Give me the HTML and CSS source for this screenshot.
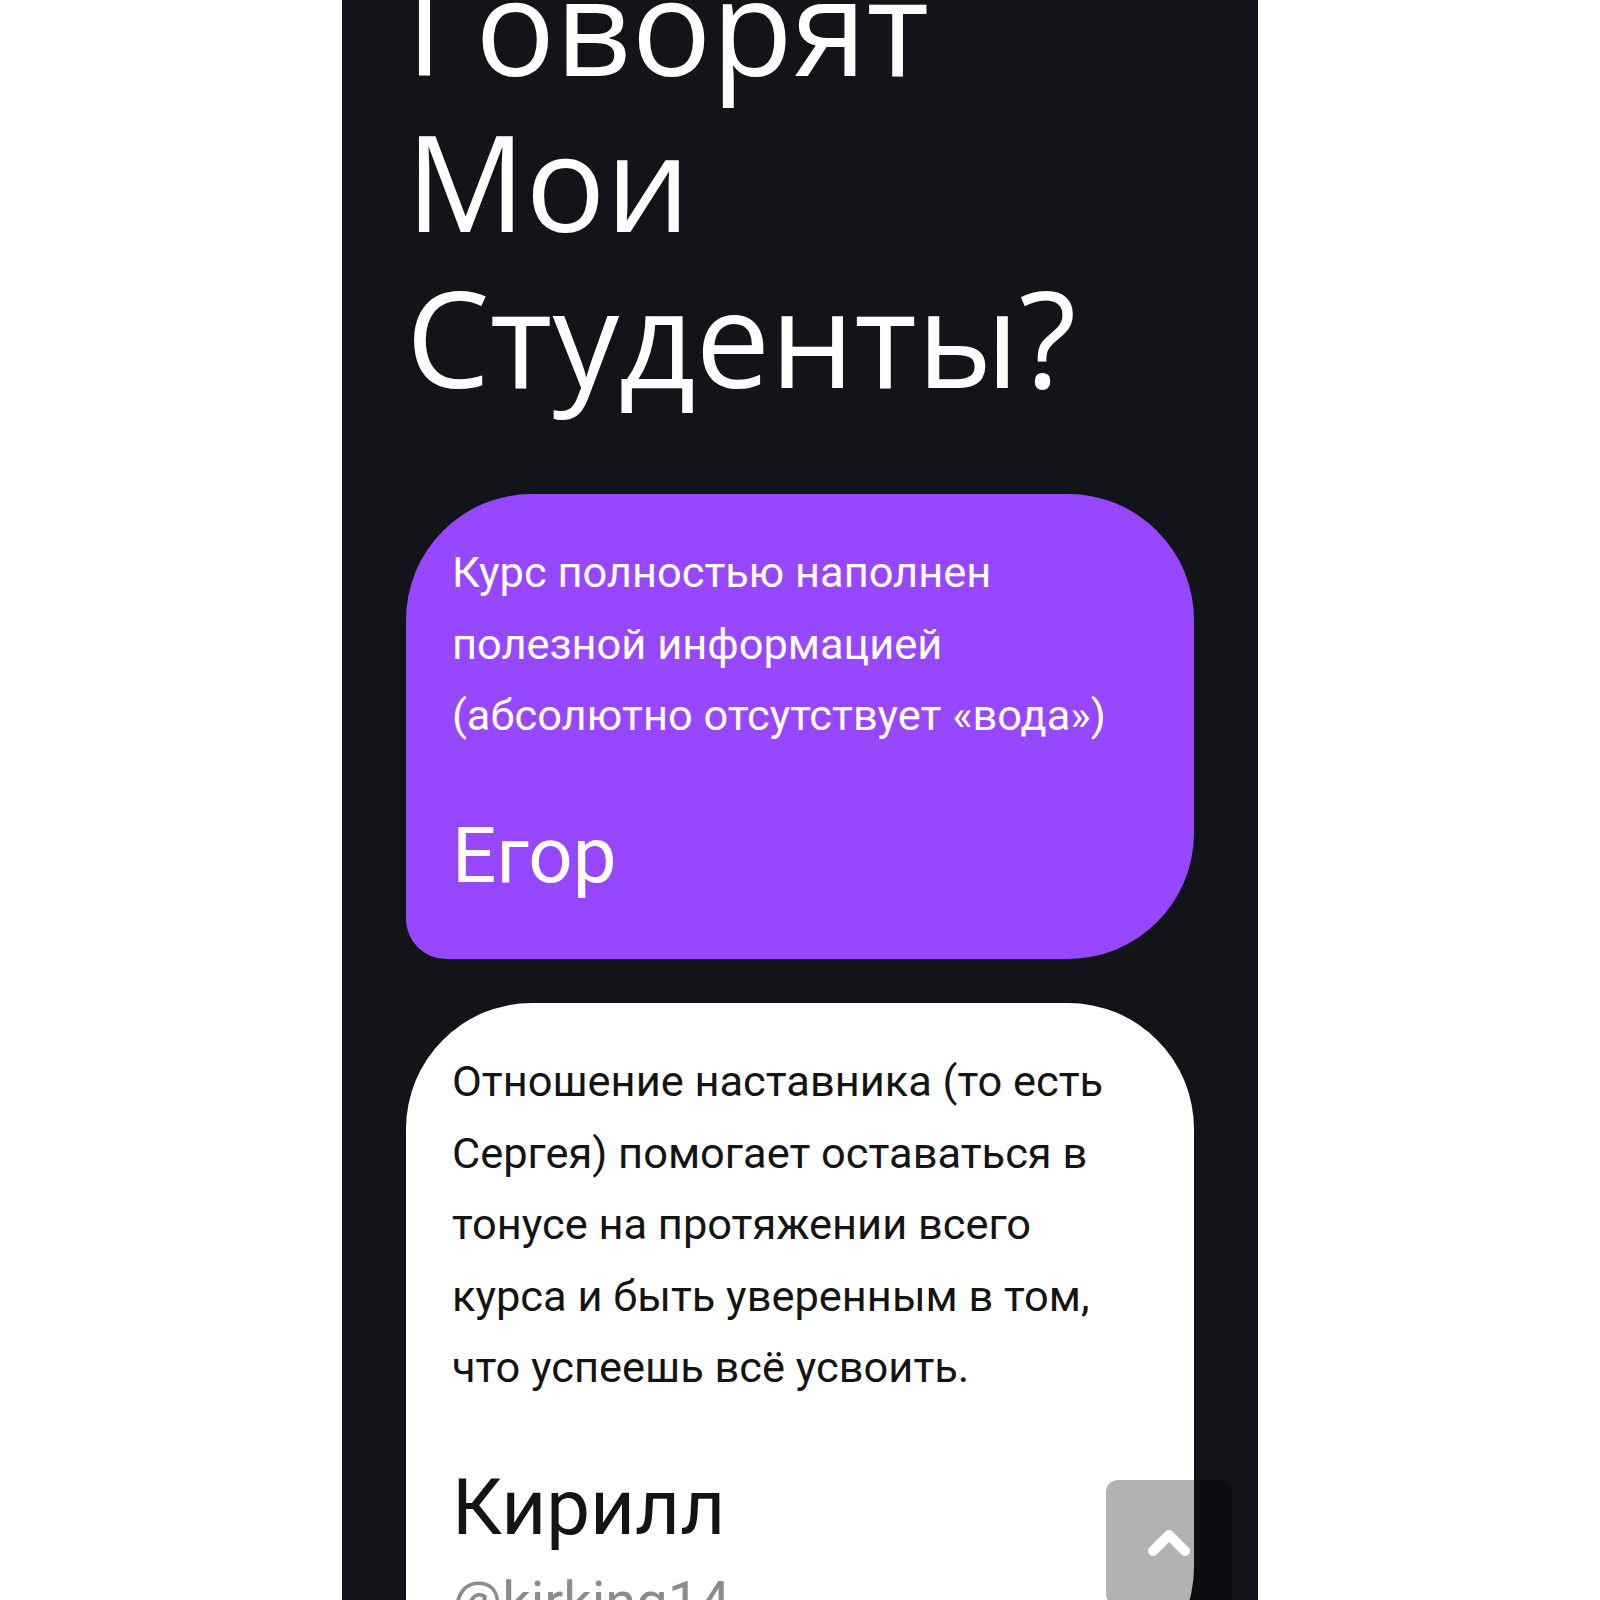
FILE: index.html
```html
<!DOCTYPE html>
<html lang="ru">
<head>
<meta charset="utf-8">
<title>Отзывы</title>
<link rel="stylesheet" href="styles.css">
</head>
<body>
<main class="panel">
  <h2 class="title">Говорят<br>Мои<br>Студенты?</h2>
  <section class="reviews">
    <article class="card card-purple">
      <p class="quote">Курс полностью наполнен<br>полезной информацией<br>(абсолютно отсутствует «вода»)</p>
      <p class="name">Егор</p>
    </article>
    <article class="card card-white">
      <p class="quote">Отношение наставника (то есть<br>Сергея) помогает оставаться в<br>тонусе на протяжении всего<br>курса и быть уверенным в том,<br>что успеешь всё усвоить.</p>
      <p class="name">Кирилл</p>
      <p class="handle">@kirking14</p>
    </article>
  </section>
</main>
<a class="to-top" href="#" aria-label="Наверх">
  <svg width="44" height="30" viewBox="0 0 44 30"><polyline points="6,23 22,7 38,23" fill="none" stroke="#fff" stroke-width="10" stroke-linecap="round" stroke-linejoin="round"/></svg>
</a>
</body>
</html>
```

FILE: styles.css
```css
html, body {
  margin: 0;
  padding: 0;
  background: #ffffff;
}

body {
  height: 1600px;
  overflow: hidden;
}

.panel {
  display: flow-root;
  box-sizing: border-box;
  width: 916px;
  height: 1600px;
  margin: 0 auto;
  padding: 0 64px;
  background: #131419;
  overflow: hidden;
}

.title {
  margin: -53px 0 79px;
  font-family: "Open Sans", "Noto Sans", sans-serif;
  font-weight: 400;
  font-size: 133px;
  line-height: 156px;
  color: #ffffff;
}

.reviews {
  display: flex;
  flex-direction: column;
  gap: 44px;
}

.card {
  padding: 43px 44px 57px 46px;
  border-radius: 126px 126px 126px 40px;
  font-family: Roboto, "Liberation Sans", sans-serif;
}

.card-purple {
  background: #9747ff;
  color: #ffffff;
}

.card-white {
  background: #ffffff;
  color: #141414;
}

.quote {
  margin: 0;
  font-size: 43.4px;
  line-height: 71.5px;
}

.name {
  margin: 57px 0 0;
  font-size: 78px;
  line-height: 1.2;
}

.handle {
  margin: 15px 0 0;
  font-size: 56px;
  line-height: 1.2;
  color: #8c8c8c;
}

.to-top {
  position: fixed;
  right: 368px;
  bottom: -6px;
  width: 126px;
  height: 126px;
  border-radius: 12px;
  background: rgba(0, 0, 0, 0.3);
  display: flex;
  align-items: center;
  justify-content: center;
}
```
